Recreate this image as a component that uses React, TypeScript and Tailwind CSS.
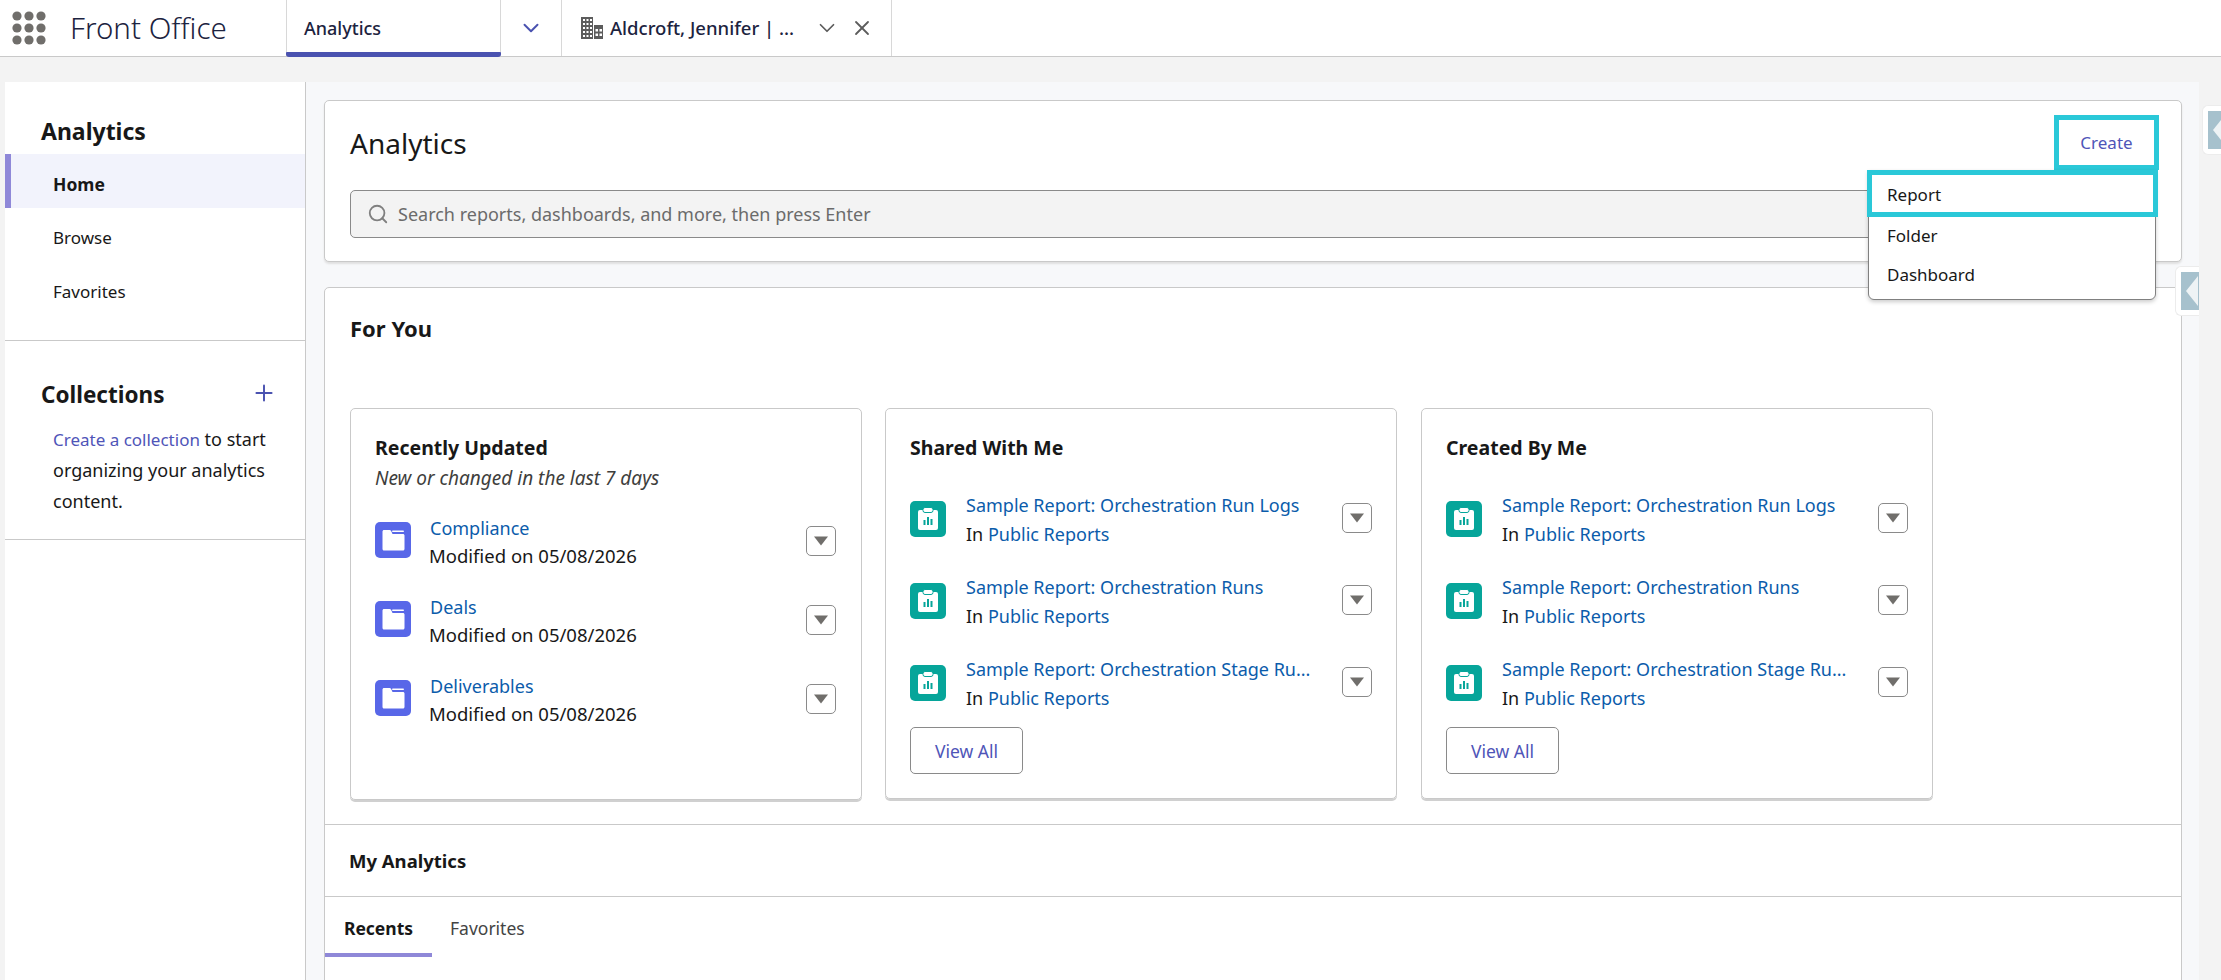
import { ChevronDown, Plus, Search, X } from 'lucide-react';

const GridDots = () => (
  <svg width="34" height="34" viewBox="0 0 34 34" className="fill-[#706e6b]">
    {[5, 17, 29].map((cy) =>
      [5, 17, 29].map((cx) => <circle key={`${cx}-${cy}`} cx={cx} cy={cy} r="4.6" />)
    )}
  </svg>
);

const Building = () => (
  <svg width="22" height="24" viewBox="0 0 22 24" className="fill-[#5c5c5c]">
    <path
      fillRule="evenodd"
      d="M0 1h12v22H0V1zm2 2v2h2V3H2zm3.500 0v2h2V3h-2zM9 3v2h2V3H9zM2 7v2h2V7H2zm3.500 0v2h2V7h-2zM9 7v2h2V7H9zm-7 4v2h2v-2H2zm3.500 0v2h2v-2h-2zM9 11v2h2v-2H9zm-7 4v2h2v-2H2zm3.500 0v2h2v-2h-2zM9 15v2h2v-2H9zm-7 4v2h2v-2H2zm3.500 0v2h2v-2h-2zM9 19v2h2v-2H9z"
    />
    <path
      fillRule="evenodd"
      d="M13 9h9v14h-9V9zm1.500 4v2.500h2.500V13h-2.500zm4 0v2.500H21V13h-2.500zm-4 4.500V20h2.500v-2.500h-2.500zm4 0V20H21v-2.500h-2.500z"
    />
  </svg>
);

const FolderIcon = () => (
  <div className="flex h-[36px] w-[36px] shrink-0 items-center justify-center rounded-[5px] bg-[#5867e8]">
    <svg width="24" height="22" viewBox="0 0 24 22" className="fill-white">
      <path d="M1.500 2.500C1.500 1.700 2.200 1 3 1h5.600c.6 0 1.100.3 1.400.8L11.500 5H22c.8 0 1.500.7 1.500 1.500V20c0 .8-.7 1.500-1.500 1.500H3c-.8 0-1.500-.7-1.500-1.500V2.500z" />
      <rect x="11" y="1.500" width="12" height="1.600" rx=".8" />
    </svg>
  </div>
);

const ReportIcon = () => (
  <div className="flex h-[36px] w-[36px] shrink-0 items-center justify-center rounded-[5px] bg-[#06a59a]">
    <svg width="22" height="24" viewBox="0 0 22 24">
      <rect x="1" y="3" width="20" height="20" rx="2" className="fill-white" />
      <rect x="6" y="0.500" width="10" height="5" rx="2" className="fill-white stroke-[#06a59a]" strokeWidth="1" />
      <rect x="6.500" y="13" width="2" height="5" className="fill-[#06a59a]" />
      <rect x="10" y="10" width="2" height="8" className="fill-[#06a59a]" />
      <rect x="13.500" y="12" width="2" height="6" className="fill-[#06a59a]" />
    </svg>
  </div>
);

const CaretButton = () => (
  <div className="flex h-[30px] w-[30px] shrink-0 items-center justify-center rounded-[5px] border border-[#8a8a8a] bg-white">
    <svg width="14" height="10" viewBox="0 0 14 10" className="fill-[#706e6b]">
      <path d="M0 .5h14L7 9.500z" />
    </svg>
  </div>
);

const SideHandle = () => (
  <div className="flex h-[50px] w-[24px] items-center rounded-l-[6px] border border-r-0 border-[#ececec] bg-white pl-[5px]">
    <div className="flex h-[38px] w-[19px] items-center overflow-hidden bg-[#a6c1cd] pl-[5px]">
      <div className="h-0 w-0 shrink-0 border-y-[15px] border-r-[12px] border-y-transparent border-r-[#eef3f5]" />
    </div>
  </div>
);

const recent = ['Compliance', 'Deals', 'Deliverables'];
const reports = [
  'Sample Report: Orchestration Run Logs',
  'Sample Report: Orchestration Runs',
  'Sample Report: Orchestration Stage Ru...',
];

const ReportCard = ({ title }: { title: string }) => (
  <div className="h-[391px] w-[512px] rounded-[5px] border border-[#c9c9c9] px-[24px] pt-[26px] shadow-[0_2px_0_#d0d0d0]">
    <h3 className="text-[19.500px] leading-[26px] font-bold text-[#181818]">{title}</h3>
    <div className="mt-[39px] flex flex-col gap-[12px]">
      {reports.map((name) => (
        <div key={name} className="flex h-[70px] items-start">
          <div className="pt-[1px]">
            <ReportIcon />
          </div>
          <div className="ml-[20px] -mt-[9px] w-[349px] min-w-0">
            <div className="text-[18px] leading-[29px] whitespace-nowrap text-[#0b5cab]">{name}</div>
            <div className="text-[18px] leading-[29px] text-[#181818]">
              In <span className="text-[#0b5cab]">Public Reports</span>
            </div>
          </div>
          <div className="ml-auto pt-[3px]">
            <CaretButton />
          </div>
        </div>
      ))}
    </div>
    <button className="mt-[-7px] h-[47px] w-[113px] rounded-[5px] border border-[#8a8a8a] pt-[1px] text-[17.500px] text-[#4f55b8]">
      View All
    </button>
  </div>
);

export default function App() {
  return (
    <div className="relative flex h-[980px] w-[2221px] flex-col overflow-hidden bg-[#f3f3f3] font-['Noto_Sans',sans-serif] text-[#181818]">
      {/* top bar */}
      <header className="flex h-[57px] shrink-0 items-stretch border-b border-[#c9c9c9] bg-white">
        <div className="flex items-center pl-[12px]">
          <GridDots />
        </div>
        <div className="flex w-[240px] items-center pl-[24px] text-[29.500px] font-light text-[#1c2340]">Front Office</div>
        <div className="relative flex w-[215px] items-center border-x border-[#d8d8d8] pl-[17px] text-[18px] font-medium text-[#1c2340]">
          Analytics
          <div className="absolute -bottom-px -left-px -right-px h-[5px] rounded-t-[1px] rounded-b-[3px] bg-[#4a52b0]" />
        </div>
        <div className="flex w-[61px] items-center justify-center border-r border-[#d8d8d8]">
          <ChevronDown size={26} strokeWidth={1.8} className="text-[#4a52b0]" />
        </div>
        <div className="flex w-[330px] items-center border-r border-[#d8d8d8] pl-[19px]">
          <Building />
          <span className="ml-[7px] w-[204px] text-[18.500px] font-medium whitespace-nowrap text-[#1c2340]">
            Aldcroft, Jennifer | ...
          </span>
          <ChevronDown size={26} strokeWidth={1.6} className="text-[#5c5c5c]" />
          <X size={24} strokeWidth={1.8} className="ml-[10px] text-[#5c5c5c]" />
        </div>
      </header>

      <div className="flex min-h-0 flex-1 pt-[25px] pl-[5px]">
        {/* left nav */}
        <aside className="w-[301px] shrink-0 border-r border-[#c9c9c9] bg-white">
          <h2 className="pt-[33px] pl-[36px] text-[23px] leading-[32px] font-bold">Analytics</h2>
          <nav className="mt-[7px] border-b border-[#c9c9c9] pb-[24px]">
            <div className="flex h-[54px] items-center border-l-[6px] border-[#8f88d8] bg-[#f2f3fc] pt-[6px] pl-[42px] text-[17.500px] font-bold">
              Home
            </div>
            <div className="flex h-[54px] items-center pt-[6px] pl-[48px] text-[17px]">Browse</div>
            <div className="flex h-[54px] items-center pt-[6px] pl-[48px] text-[17px]">Favorites</div>
          </nav>
          <div className="border-b border-[#c9c9c9] pt-[38px] pb-[22px]">
            <div className="flex items-center justify-between pr-[28px] pl-[36px]">
              <h2 className="text-[22.500px] leading-[32px] font-bold">Collections</h2>
              <Plus size={26} strokeWidth={1.8} className="-mt-[4px] text-[#4a52b0]" />
            </div>
            <p className="mt-[13px] pr-[14px] pl-[48px] text-[18px] leading-[31px]">
              <span className="text-[17px] text-[#4f55b8]">Create a collection</span> to start organizing your analytics content.
            </p>
          </div>
        </aside>

        {/* main */}
        <main className="relative flex w-[1893px] shrink-0 flex-col gap-[25px] bg-[#f7f8fa] pt-[18px] pr-[17px] pl-[18px]">
          <section className="relative h-[162px] shrink-0 rounded-[5px] border border-[#c9c9c9] bg-white px-[25px] pt-[22px] shadow-[0_2px_2px_#e0e0e0]">
            <div className="flex items-start justify-between">
              <h1 className="text-[28px] leading-[40px] font-normal">Analytics</h1>
              <button className="mt-[-8px] mr-[-3px] flex h-[55px] w-[105px] items-center justify-center border-[5px] border-[#2ac8d8] text-[17px] text-[#4f55b8]">
                Create
              </button>
            </div>
            <div className="mt-[20px] flex h-[48px] w-[1540px] items-center rounded-[5px] border border-[#8a8a8a] bg-[#f3f3f3] pl-[16px] text-[18px] text-[#6b6b6b]">
              <Search size={22} strokeWidth={2} className="text-[#808080]" />
              <span className="ml-[9px]">Search reports, dashboards, and more, then press Enter</span>
            </div>
            {/* dropdown */}
            <div className="absolute top-[69px] left-[1543px] z-10 h-[130px] w-[288px] rounded-b-[6px] border border-[#808080] bg-white text-[17px] shadow-[0_2px_4px_rgba(0,0,0,0.2)]">
              <div className="-mt-px -mr-[3px] -ml-[2px] flex h-[47px] items-center border-[5px] border-[#2ac8d8] pt-[2px] pl-[15px]">Report</div>
              <div className="flex h-[38px] items-center pl-[18px]">Folder</div>
              <div className="flex h-[39px] items-center pl-[18px]">Dashboard</div>
            </div>
          </section>

          <section className="h-[720px] shrink-0 rounded-t-[5px] border border-[#c9c9c9] bg-white">
            <h2 className="pt-[25px] pl-[25px] text-[22px] leading-[30px] font-bold">For You</h2>
            <div className="mt-[65px] flex h-[417px] gap-[23px] border-b border-[#c9c9c9] pl-[25px]">
              <div className="h-[392px] w-[512px] rounded-[5px] border border-[#c9c9c9] px-[24px] pt-[26px] shadow-[0_2px_0_#d0d0d0]">
                <h3 className="text-[19.500px] leading-[26px] font-bold text-[#181818]">Recently Updated</h3>
                <div className="mt-[2px] text-[19px] leading-[30px] text-[#3e3e3c] italic">New or changed in the last 7 days</div>
                <div className="mt-[29px] flex flex-col gap-[21px]">
                  {recent.map((name) => (
                    <div key={name} className="flex h-[58px] items-start">
                      <FolderIcon />
                      <div className="ml-[18px] -mt-[8px]">
                        <div className="pl-[1px] text-[18px] leading-[28px] text-[#0b5cab]">{name}</div>
                        <div className="text-[18.500px] leading-[28px] text-[#181818]">Modified on 05/08/2026</div>
                      </div>
                      <div className="ml-auto mr-[1px] pt-[4px]">
                        <CaretButton />
                      </div>
                    </div>
                  ))}
                </div>
              </div>
              <ReportCard title="Shared With Me" />
              <div className="ml-[1px]">
                <ReportCard title="Created By Me" />
              </div>
            </div>
            <div className="flex h-[72px] items-center border-b border-[#c9c9c9] pl-[24px] text-[18.500px] font-bold">My Analytics</div>
            <div className="flex h-[60px] items-center">
              <div className="relative flex h-[60px] w-[107px] items-center justify-center pt-[3px] text-[17.500px] font-bold">
                Recents
                <div className="absolute right-0 bottom-0 left-0 h-[4px] bg-[#8f88d8]" />
              </div>
              <div className="pt-[3px] pl-[18px] text-[17.500px] text-[#444444]">Favorites</div>
            </div>
          </section>

          <div className="absolute top-[23px] left-[1896px] z-10">
            <SideHandle />
          </div>
          <div className="absolute top-[184px] right-0 z-10">
            <SideHandle />
          </div>
        </main>
      </div>
    </div>
  );
}
